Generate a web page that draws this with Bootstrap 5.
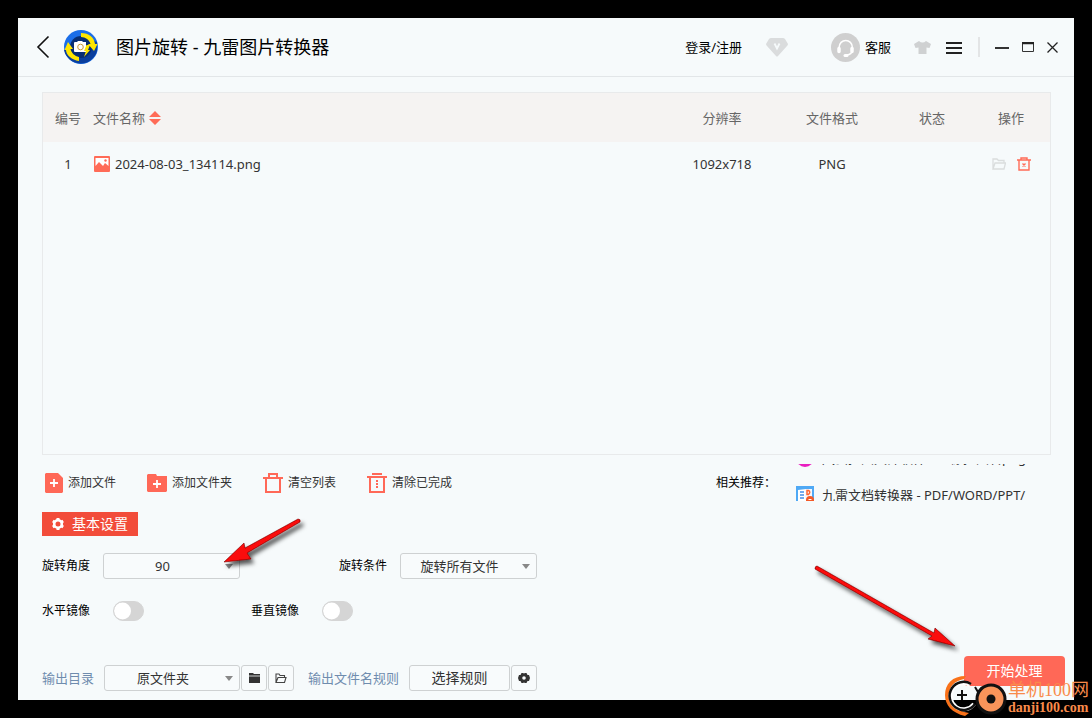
<!DOCTYPE html>
<html lang="zh-CN">
<head>
<meta charset="utf-8">
<meta name="viewport" content="width=device-width, initial-scale=1">
<title>图片旋转 - 九雷图片转换器</title>
<link href="https://cdn.jsdelivr.net/npm/bootstrap@5.3.0/dist/css/bootstrap.min.css" rel="stylesheet">
<style>
  body { background: #000; color: #333; font: 13px/20px "Noto Sans", "Noto Sans CJK SC", sans-serif; }
  button { font-family: inherit; }
  svg { display: block; flex: none; }
  .desk { min-height: 100vh; padding: 18px; }
  .app-window { background: #f6fafb; }
  .title-bar { height: 59px; padding: 0 16px 0 18px; border-bottom: 1px solid #e2e6e8; color: #000; }
  .title-bar h1 { font-size: 18px; line-height: 24px; font-weight: 400; margin-left: 18px; }
  .app-logo { margin-left: 14px; }
  .bare { border: 0; background: none; padding: 0; color: inherit; display: flex; align-items: center; }
  .login-link { color: #000; text-decoration: none; }
  .service { margin-left: 43px; gap: 5px; }
  .skin { margin-left: 23px; }
  .menu-btn, .min-btn { margin-left: 15px; }
  .max-btn, .close-btn { margin-left: 13px; }
  .divider-bar { width: 2px; height: 20px; background: #e3e5e6; }
  .main-area { padding: 15px 23px 0 24px; }
  .file-list { border: 1px solid #e8eaeb; }
  .file-list table { table-layout: fixed; }
  .file-list th { height: 49px; background: #f5f3f2; color: #666; font-weight: 400; padding: 0; text-align: center; vertical-align: middle; }
  .file-list td { height: 44px; padding: 0; text-align: center; vertical-align: middle; }
  .file-list .name-cell { text-align: left; }
  .sort-btn { gap: 4px; }
  .file-name { gap: 5px; padding-left: 1px; }
  .row-actions { gap: 11px; }
  .w-no { width: 50px; } .w-res { width: 100px; } .w-fmt { width: 120px; } .w-stat { width: 80px; } .w-act { width: 78px; }
  .tool-row { margin-top: 9px; padding-left: 3px; height: 37px; font-size: 12px; }
  .tools { gap: 31px; }
  .tools button { gap: 5px; }
  .related { width: 315px; color: #000; margin-right: 20px; flex: none; }
  .ticker { width: 235px; height: 37px; font-size: 13px; overflow: hidden; }
  .ticker a { height: 37px; gap: 8px; color: #333; text-decoration: none; white-space: nowrap; }
  .ticker a:first-child { margin-top: -25px; }
  .section-tag { margin-top: 11px; width: 96px; height: 24px; padding-left: 9px; gap: 7px; background: #f24c3a; color: #fff; font-size: 14px; }
  .option-row { font-size: 12px; color: #000; }
  .angle-row { margin-top: 17px; gap: 99px; }
  .field { gap: 13px; }
  .mirror-row { margin-top: 22px; gap: 107px; }
  .toggle { gap: 23px; }
  .drop { appearance: none; width: 137px; height: 26px; padding: 0 18px 0 0; border: 1px solid #ced1d2; border-radius: 3px; font-size: 13px; color: #333; text-align: center; text-align-last: center;
    background: #f8fbfc url("data:image/svg+xml,%3Csvg xmlns='http://www.w3.org/2000/svg' width='8' height='5'%3E%3Cpath d='M0 0h8L4 5z' fill='%23888'/%3E%3C/svg%3E") no-repeat right 6px center; }
  .mirror-row .form-check-input { width: 31px; height: 20px; margin: 0; border: 1px solid #d5d5d5; border-radius: 10px;
    background: #d5d5d5 url("data:image/svg+xml,%3Csvg xmlns='http://www.w3.org/2000/svg' width='18' height='18'%3E%3Ccircle cx='8.5' cy='9' r='8.5' fill='%23fff'/%3E%3C/svg%3E") no-repeat left center; }
  .foot-row { margin: 35px 9px 0 24px; height: 44px; }
  .foot-row .drop { width: 136px; margin-right: 1px; }
  .out-fields { padding-top: 9px; }
  .foot-row label, .rule-label { color: #6f8cae; margin-right: 10px; }
  .rule-label { margin-left: 14px; }
  .boxed { height: 26px; min-width: 26px; padding: 0; display: flex; align-items: center; justify-content: center; border: 1px solid #ced1d2; border-radius: 3px; background: #f8fbfc; color: #333; font-size: 14px; }
  .boxed + .boxed { margin-left: 1px; }
  .rule-btn { width: 101px; }
  .start { width: 101px; height: 30px; padding: 0; border: 0; border-radius: 4px; background: #ff6857; color: #fff; font-size: 14px; line-height: 20px; }
  .pointer { position: absolute; pointer-events: none; z-index: 3; }
  .pointer-angle { left: 117px; top: -38px; }
  .pointer-start { right: 105px; top: -96px; }
  .site-mark { position: absolute; right: 3px; bottom: 1px; color: #f98b4b; z-index: 4; pointer-events: none; }
  .site-mark .cn { font: 18px/18px "Liberation Serif", "Noto Sans CJK SC", serif; }
  .site-mark .en { font: bold 14px/18px "Liberation Serif", serif; }
</style>
</head>
<body>
<div class="desk d-flex position-relative">
  <div class="app-window d-flex flex-column flex-grow-1">
    <header class="title-bar d-flex align-items-center">
      <button class="bare" aria-label="返回"><svg width="14" height="24" fill="none" stroke="#111" stroke-width="1.6"><path d="M12.500 1.500 2 12l10.500 10.500"/></svg></button>
      <svg class="app-logo" width="34" height="34" viewBox="0 0 34 34">
        <circle cx="17" cy="17" r="17" fill="#1b6ee8"/>
        <path d="M0 20a17 17 0 0 0 33 1V12L24 9z" fill="#0b3f9d"/>
        <circle cx="17" cy="17" r="11" fill="#082e73"/>
        <path d="M17 3c8 0 13 4 14 11l2.500 0-3.500 7-6-7h2.500c-1-4-5-7-9.500-7z" fill="#ffe600"/>
        <path d="M15 31C8 30 2 25 2 20H0.500L4 12l5 7H6.500c1 4 4 7 8.500 8z" fill="#ffe600"/>
        <path d="M11 12h2l1-1h4l1 1h3v10H11q-1 0-1-1v-8q0-1 1-1z" fill="#fff"/>
        <circle cx="16.500" cy="17" r="2.800" fill="#fff" stroke="#c79a3a"/>
        <path d="M22.500 15h3.500l-2 5h2l-6 7 2-6h-2z" fill="#ffe600"/>
      </svg>
      <h1 class="mb-0">图片旋转 - 九雷图片转换器</h1>
      <div class="ms-auto d-flex align-items-center">
        <a class="login-link" href="#">登录/注册</a>
        <button class="bare ms-4" aria-label="会员"><svg width="22" height="20"><path d="M5 1h12q1 0 2 1l3 5q0 1-1 2L12 19q-1 1-2 0L1 9Q0 8 0 7l3-5q1-1 2-1z" fill="#dadcdd"/><path d="m8.500 6.500 2.500 5 2.500-5" fill="none" stroke="#f6fafb" stroke-width="1.800"/></svg></button>
        <button class="bare service">
          <svg width="29" height="29"><circle cx="14.500" cy="14.500" r="14.500" fill="#cfcfcf"/><g fill="none" stroke="#fff"><path d="M8 15c0-10 13.500-10 13.500 0 0 4-2 7-6 7" stroke-width="1.500"/><path d="M8 15.500v3M21 15.500v3" stroke-width="3.500" stroke-linecap="round"/><path d="M14 22.500h2" stroke-width="3" stroke-linecap="round"/></g></svg>
          客服</button>
        <button class="bare skin" aria-label="皮肤"><svg width="17" height="13"><path d="M5 0q3.500 3 7 0l5 3-1.500 4-3-.5V13h-8V6.500l-3 .5L0 3z" fill="#cfd1d2"/></svg></button>
        <button class="bare menu-btn" aria-label="菜单"><svg width="16" height="13" stroke="#222" stroke-width="2"><path d="M0 2h16M0 7h16M0 12h16"/></svg></button>
        <span class="divider-bar ms-3"></span>
        <button class="bare min-btn" aria-label="最小化"><svg width="14" height="12"><path d="M0 7h14" stroke="#333" stroke-width="2"/></svg></button>
        <button class="bare max-btn" aria-label="最大化"><svg width="12" height="10"><path d="M.5 1v8.500h11V1" fill="none" stroke="#333"/><path d="M0 1h12" stroke="#222" stroke-width="2.500"/></svg></button>
        <button class="bare close-btn" aria-label="关闭"><svg width="11" height="11" stroke="#222" stroke-width="1.300"><path d="m.5.5 10 10m0-10-10 10"/></svg></button>
      </div>
    </header>

    <main class="main-area d-flex flex-column flex-grow-1">
      <div class="file-list flex-grow-1">
        <table class="w-100">
          <thead><tr>
            <th class="w-no">编号</th>
            <th class="name-cell"><button class="bare sort-btn">文件名称<svg width="12" height="16" fill="#ff6b57"><path d="m6 1 6 6H0zM6 15l6-6H0z"/></svg></button></th>
            <th class="w-res">分辨率</th><th class="w-fmt">文件格式</th><th class="w-stat">状态</th><th class="w-act">操作</th>
          </tr></thead>
          <tbody><tr>
            <td>1</td>
            <td class="name-cell"><div class="file-name d-flex align-items-center">
              <svg width="16" height="16"><rect width="16" height="16" rx="1" fill="#ff6b57"/><path d="M1.500 2h13v8L11 7l-2 3-4-4-3.500 4z" fill="#fff"/><circle cx="11.500" cy="4.500" r="1.200" fill="#ff6b57"/></svg>2024-08-03_134114.png</div></td>
            <td>1092x718</td><td>PNG</td><td></td>
            <td><div class="row-actions d-flex align-items-center justify-content-center">
              <button class="bare" aria-label="打开文件夹"><svg width="14" height="12" fill="none" stroke="#dadddd" stroke-width="1.300"><path d="M1 11V1h4l1.500 1.500H12V5M1 11l2-6h10.500L12 11z"/></svg></button>
              <button class="bare" aria-label="删除"><svg width="14" height="14" fill="none" stroke="#ff6b57" stroke-width="1.400"><path d="M0 3h14M4 3V1h6v2M2 3v10h10V3"/><path d="m5.500 6.500 3 3m0-3-3 3"/></svg></button>
            </div></td>
          </tr></tbody>
        </table>
      </div>

      <div class="tool-row d-flex align-items-center justify-content-between">
        <div class="tools d-flex">
          <button class="bare"><svg width="18" height="20"><path d="M1 0h12l5 5v14l-1 1H1l-1-1V1z" fill="#ff6857"/><path d="M5 10h8M9 6v8" stroke="#fff" stroke-width="1.800"/></svg>添加文件</button>
          <button class="bare"><svg width="20" height="18"><path d="M1 0h8l1 2h10v15l-1 1H1l-1-1V1z" fill="#ff6857"/><path d="M6 10h8M10 6v8" stroke="#fff" stroke-width="1.800"/></svg>添加文件夹</button>
          <button class="bare"><svg width="20" height="20" fill="none" stroke="#ff6857" stroke-width="2"><path d="M0 5h20M6 5V1h8v4M3 5v14h14V5"/></svg>清空列表</button>
          <button class="bare"><svg width="20" height="20" fill="none" stroke="#ff6857" stroke-width="2"><path d="M0 4h20M5 1h10M3 4v15h14V4M10 7v8" /><path d="M8 9.500h4M8 12.500h4" stroke="#f6fafb" stroke-width="1"/></svg>清除已完成</button>
        </div>
        <div class="related d-flex align-items-center">
          <span class="me-auto">相关推荐：</span>
          <div class="ticker">
            <a class="d-flex align-items-center" href="#"><svg width="18" height="18"><circle cx="9" cy="9" r="9" fill="#e91ec0"/><circle cx="9" cy="9" r="6" fill="#3a1560"/></svg>风云抠图大师软件 - 人像抠图转png</a>
            <a class="d-flex align-items-center" href="#"><svg width="18" height="18"><rect width="18" height="18" fill="#4fa9f5"/><path d="M2 4l8-1v12H2z" fill="#fff"/><path d="M9 3h7v11H9z" fill="#f4f8ff"/><path d="M4 6h4M4 9h4M4 12h4" stroke="#448de8" stroke-width="1.500"/><path d="M11 4.500h1.500q2.500 1.500 0 4H11z" fill="none" stroke="#ff6430" stroke-width="1.500"/><circle cx="14" cy="14" r="4" fill="#f45a27"/><path d="M12.500 13.500h3" stroke="#fff"/></svg>九雷文档转换器 - PDF/WORD/PPT/</a>
          </div>
        </div>
      </div>

      <div class="section-tag d-flex align-items-center">
        <svg width="14" height="14" viewBox="0 0 14 14"><circle cx="7" cy="7" r="3.800" fill="none" stroke="#fff" stroke-width="2.600"/><path d="M7 1v2M7 11v2M1.800 4l1.700 1M10.500 9l1.700 1M1.800 10l1.700-1M10.500 5l1.700-1" stroke="#fff" stroke-width="3"/></svg>基本设置</div>

      <div class="option-row angle-row d-flex align-items-center">
        <div class="field d-flex align-items-center position-relative">
          <label for="angle">旋转角度</label>
          <select id="angle" class="drop"><option>90</option><option>180</option><option>270</option></select>
          <svg class="pointer pointer-angle" width="150" height="60"><defs><filter id="sh" x="-20%" y="-20%" width="140%" height="150%"><feDropShadow dx="3" dy="4" stdDeviation="2" flood-color="#000" flood-opacity=".65"/></filter></defs><path d="M139 4 86 33l-1-5-20 19 27-3-4-6 53-31q1-3-2-3z" fill="#fa0808" stroke="#700" stroke-width=".6" filter="url(#sh)"/></svg>
        </div>
        <div class="field d-flex align-items-center">
          <label for="cond">旋转条件</label>
          <select id="cond" class="drop"><option>旋转所有文件</option><option>仅旋转横向图片</option></select>
        </div>
      </div>

      <div class="option-row mirror-row d-flex align-items-center">
        <div class="toggle d-flex align-items-center"><label for="mh">水平镜像</label><input id="mh" class="form-check-input" type="checkbox" role="switch"></div>
        <div class="toggle d-flex align-items-center"><label for="mv">垂直镜像</label><input id="mv" class="form-check-input" type="checkbox" role="switch"></div>
      </div>
    </main>

    <footer class="foot-row d-flex align-items-start justify-content-between">
      <div class="out-fields d-flex align-items-center">
        <label for="out">输出目录</label>
        <select id="out" class="drop"><option>原文件夹</option><option>自定义</option></select>
        <button class="boxed" aria-label="选择文件夹"><svg width="11" height="10"><path d="M0 0h4l1 1h6v9H0z" fill="#333"/><path d="M0 3h11" stroke="#f8fbfc" stroke-width=".8"/></svg></button>
        <button class="boxed" aria-label="打开文件夹"><svg width="12" height="10" fill="none" stroke="#444" stroke-width="1.100"><path d="M1 9.500V1h3l1 1.500h4.500V4M1 9.500 3 4.500h8L9.500 9.500z"/></svg></button>
        <span class="rule-label">输出文件名规则</span>
        <button class="boxed rule-btn">选择规则</button>
        <button class="boxed" aria-label="规则设置"><svg width="12" height="10"><path d="M3.500 0h1.500l1 .5 1-.5h1.500l1 2H11l1 3-1 3H9.500l-1 2H7l-1-.5-1 .5H3.500l-1-2H1L0 5l1-3h1.500z" fill="#333"/><circle cx="6" cy="5" r="1.800" fill="#f8fbfc"/></svg></button>
      </div>
      <div class="position-relative">
        <button class="start">开始处理</button>
        <svg class="pointer pointer-start" width="170" height="100"><path d="M27 6 144 73l1-5 20 18-27-7 4-3L25 9q0-3 2-3z" fill="#fa0808" stroke="#700" stroke-width=".6" filter="url(#sh)"/></svg>
      </div>
    </footer>
  </div>

  <div class="site-mark d-flex align-items-end">
    <svg width="64" height="42" viewBox="0 0 64 42">
      <path d="M22 1C8 1 1 9 1 20c0 10 7 18 20 21l4-3C11 36 5 30 5 20 5 12 10 6 20 4z" fill="#f9721a"/>
      <path d="M26 10a13 13 0 1 0 4 19" fill="none" stroke="#fff" stroke-width="4"/>
      <path d="M27 9a14 14 0 1 0 4 20" fill="none" stroke="#111" stroke-width="2.500"/>
      <path d="M18 15v10M13 20h10" stroke="#111" stroke-width="2"/>
      <path d="m31 12 3 5 4-5" fill="none" stroke="#111" stroke-width="2"/>
      <circle cx="47" cy="24" r="14" fill="#f9945a" stroke="#111" stroke-width="3"/>
      <circle cx="47" cy="24" r="4.500" fill="#111"/>
    </svg>
    <div><div class="cn">单机100网</div><div class="en">danji100.com</div></div>
  </div>
</div>
<script src="https://cdn.jsdelivr.net/npm/bootstrap@5.3.0/dist/js/bootstrap.bundle.min.js"></script>
</body>
</html>
